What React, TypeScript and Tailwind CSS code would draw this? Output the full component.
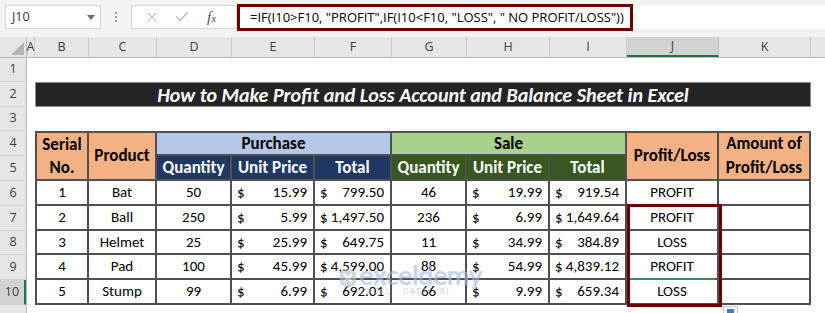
import React from "react";
import { X, Check } from "lucide-react";

type Row = {
  sn: string;
  product: string;
  pq: string;
  pu: string;
  pt: string;
  sq: string;
  su: string;
  st: string;
  pl: string;
};

const rows: Row[] = [
  { sn: "1", product: "Bat", pq: "50", pu: "15.99", pt: "799.50", sq: "46", su: "19.99", st: "919.54", pl: "PROFIT" },
  { sn: "2", product: "Ball", pq: "250", pu: "5.99", pt: "1,497.50", sq: "236", su: "6.99", st: "1,649.64", pl: "PROFIT" },
  { sn: "3", product: "Helmet", pq: "25", pu: "25.99", pt: "649.75", sq: "11", su: "34.99", st: "384.89", pl: "LOSS" },
  { sn: "4", product: "Pad", pq: "100", pu: "45.99", pt: "4,599.00", sq: "88", su: "54.99", st: "4,839.12", pl: "PROFIT" },
  { sn: "5", product: "Stump", pq: "99", pu: "6.99", pt: "692.01", sq: "66", su: "9.99", st: "659.34", pl: "LOSS" },
];

const columns = [
  { name: "A", cls: "w-[8px]" },
  { name: "B", cls: "w-[54px]" },
  { name: "C", cls: "w-[68px]" },
  { name: "D", cls: "w-[75px]" },
  { name: "E", cls: "w-[83px]" },
  { name: "F", cls: "w-[77px]" },
  { name: "G", cls: "w-[75px]" },
  { name: "H", cls: "w-[83px]" },
  { name: "I", cls: "w-[77px]" },
  { name: "J", cls: "w-[92px]" },
  { name: "K", cls: "w-[92px]" },
];

const rowHeaders = [
  { n: "1", cls: "h-[24px]" },
  { n: "2", cls: "h-[25px]" },
  { n: "3", cls: "h-[24px]" },
  { n: "4", cls: "h-[25px]" },
  { n: "5", cls: "h-[25px]" },
  { n: "6", cls: "h-[25px]" },
  { n: "7", cls: "h-[25px]" },
  { n: "8", cls: "h-[24px]" },
  { n: "9", cls: "h-[25px]" },
];

const ui = "font-['Open_Sans','Noto_Sans',sans-serif]";
const cell = "border-r-2 border-b-2 border-[#505050] flex items-center";
const head = "font-bold text-[17px]";

// accounting style: $ on the left, amount on the right
const Money = ({ v }: { v: string }) => (
  <div className={`${cell} justify-between pl-[5px] pr-[6px]`}>
    <span>$</span>
    <span>{v}</span>
  </div>
);

const App = () => {
  return (
    <div className="w-[825px] h-[313px] overflow-hidden bg-white relative">
      {/* formula bar */}
      <div className={`h-[37px] bg-[#f3f3f3] flex items-start pt-[4px] ${ui}`}>
        <div className="ml-[5px] mt-[1px] w-[96px] h-[24px] bg-white border border-[#d6d6d6] flex items-center justify-between pl-[6px] pr-[5px]">
          <span className="text-[12.5px] text-[#333]">J10</span>
          <svg width="8" height="5" viewBox="0 0 8 5">
            <path d="M0 0 L8 0 L4 5 Z" fill="#6b6b6b" />
          </svg>
        </div>
        <div className="w-[30px] h-[26px] flex flex-col items-center justify-center gap-[2px]">
          <div className="w-[2px] h-[2px] bg-[#9a9a9a]" />
          <div className="w-[2px] h-[2px] bg-[#9a9a9a]" />
          <div className="w-[2px] h-[2px] bg-[#9a9a9a]" />
        </div>
        <div className="mt-[1px] w-[106px] h-[24px] bg-white border border-[#d6d6d6] flex items-center pl-[12px] gap-[14px]">
          <X size={16} strokeWidth={1.4} color="#a8a8a8" />
          <Check size={16} strokeWidth={1.6} color="#a8a8a8" />
          <span className="ml-[3px] font-['Liberation_Serif',serif] italic text-[15px] text-[#555]">
            f<span className="text-[11px]">x</span>
          </span>
        </div>
        <div className="h-[27px] w-[396px] border-[3px] border-[#6e0000] bg-white flex items-center pl-[10px] text-[13px] text-black whitespace-nowrap">
          =IF(I10&gt;F10, "PROFIT",IF(I10&lt;F10, "LOSS", " NO PROFIT/LOSS"))
        </div>
        <div className="flex-1 mt-[1px] h-[24px] bg-white" />
      </div>

      {/* column headers */}
      <div className={`flex h-[21px] bg-[#e6e6e6] border-b border-[#bcbcbc] text-[12.5px] text-[#404040] ${ui}`}>
        <div className="w-[27px] shrink-0 border-r border-[#bcbcbc] flex items-end justify-end pr-[2px] pb-[2px]">
          <svg width="13" height="13" viewBox="0 0 13 13">
            <path d="M13 0 L13 13 L0 13 Z" fill="#b4b4b4" />
          </svg>
        </div>
        {columns.map((c) => (
          <div
            key={c.name}
            className={`${c.cls} shrink-0 flex items-center justify-center ${
              c.name === "J"
                ? "bg-[#d2d2d2] border-b-2 border-b-[#217346] border-r border-r-[#bcbcbc]"
                : "border-r border-[#cdcdcd]"
            }`}
          >
            {c.name}
          </div>
        ))}
        <div className="flex-1" />
      </div>

      {/* body */}
      <div className="flex">
        <div className={`w-[27px] shrink-0 bg-[#e6e6e6] border-r border-[#bcbcbc] text-[12.5px] text-[#404040] ${ui}`}>
          {rowHeaders.map((r) => (
            <div key={r.n} className={`${r.cls} border-b border-[#d0d0d0] flex items-center justify-center`}>
              {r.n}
            </div>
          ))}
          <div className="h-[25px] bg-[#d2d2d2] border-b border-[#d0d0d0] border-r-2 border-r-[#217346] flex items-center justify-center">
            10
          </div>
          <div className="h-[10px]" />
        </div>

        <div className="flex-1 pl-[8px] font-['Calibri','Carlito','Lato',sans-serif] relative">
          <div className="h-[24px]" />
          <div className="h-[25px] w-[776px] bg-[#242424] border border-[#8a8a8a] flex items-center justify-center text-white font-bold italic text-[20px]">
            How to Make Profit and Loss Account and Balance Sheet in Excel
          </div>
          <div className="h-[24px]" />

          <div className="relative w-[776px] grid grid-cols-[52px_68px_75px_83px_77px_75px_83px_77px_92px_92px] grid-rows-[23px_25px_25px_25px_24px_25px_25px] border-l-2 border-t-2 border-[#505050] text-[15px] text-black">
            <div className={`${cell} ${head} row-span-2 bg-[#f4b183] flex-col justify-center leading-[23px]`}>
              <span>Serial</span>
              <span>No.</span>
            </div>
            <div className={`${cell} ${head} row-span-2 bg-[#f4b183] justify-center`}>Product</div>
            <div className={`${cell} ${head} col-span-3 bg-[#b4c7e7] justify-center`}>Purchase</div>
            <div className={`${cell} ${head} col-span-3 bg-[#a9d18e] justify-center`}>Sale</div>
            <div className={`${cell} ${head} row-span-2 bg-[#f4b183] justify-center`}>Profit/Loss</div>
            <div className={`${cell} ${head} row-span-2 bg-[#f4b183] flex-col justify-center leading-[24px]`}>
              <span>Amount of</span>
              <span>Profit/Loss</span>
            </div>
            <div className={`${cell} ${head} bg-[#203864] justify-center text-white`}>Quantity</div>
            <div className={`${cell} ${head} bg-[#203864] justify-center text-white`}>Unit Price</div>
            <div className={`${cell} ${head} bg-[#203864] justify-center text-white`}>Total</div>
            <div className={`${cell} ${head} bg-[#385723] justify-center text-white`}>Quantity</div>
            <div className={`${cell} ${head} bg-[#385723] justify-center text-white`}>Unit Price</div>
            <div className={`${cell} ${head} bg-[#385723] justify-center text-white`}>Total</div>

            {rows.map((r, i) => (
              <React.Fragment key={r.sn}>
                <div className={`${cell} justify-center`}>{r.sn}</div>
                <div className={`${cell} justify-center`}>{r.product}</div>
                <div className={`${cell} justify-center`}>{r.pq}</div>
                <Money v={r.pu} />
                <Money v={r.pt} />
                <div className={`${cell} justify-center`}>{r.sq}</div>
                <Money v={r.su} />
                <Money v={r.st} />
                <div className={`${cell} justify-center relative`}>
                  {i === 4 && <div className="absolute left-0 right-[2px] -top-[2px] h-[2px] bg-[#3d8a55]" />}
                  {r.pl}
                </div>
                <div className={cell} />
              </React.Fragment>
            ))}

            {/* highlight J7:J10 */}
            <div className="absolute left-[590px] top-[71px] w-[95px] h-[103px] border-[3px] border-[#6e0000]" />

            {/* watermark */}
            <div className="absolute left-[303px] top-[128px] flex items-center gap-[3px] opacity-60 pointer-events-none font-['Lato',sans-serif]">
              <svg width="16" height="20" viewBox="0 0 16 20">
                <path d="M0 4 L8 0 L16 4 L16 16 L8 20 L0 16 Z" fill="#b7bfcc" />
                <path d="M4 6 L12 14 M12 6 L4 14" stroke="#ffffff" strokeWidth="2" />
              </svg>
              <div className="flex flex-col leading-none">
                <span className="text-[27px] font-bold text-[#9fb6e3] tracking-[-0.5px]">exceldemy</span>
                <span className="text-[7px] text-[#a9b3c4] tracking-[2px] ml-[2px]">EXCEL · DATA · BI</span>
              </div>
            </div>
          </div>

          {/* quick analysis button */}
          <div className="absolute left-[696px] top-[248px] w-[15px] h-[12px] border border-[#c8c8c8] bg-white flex items-start justify-center pt-[2px]">
            <div className="w-[7px] h-[6px] bg-[#3b78d8]" />
          </div>
        </div>
      </div>
    </div>
  );
};

export default App;
